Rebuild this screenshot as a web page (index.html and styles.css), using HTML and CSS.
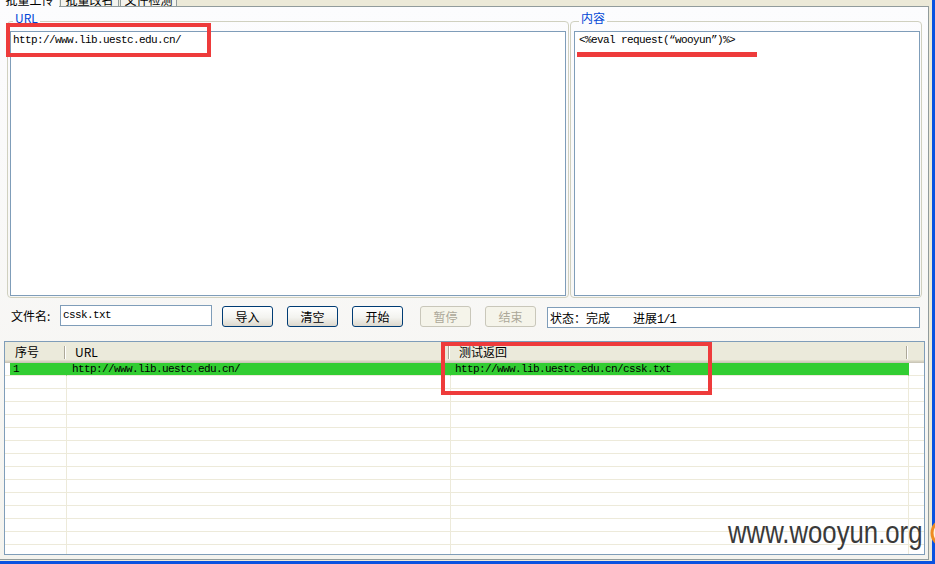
FILE: index.html
```html
<!DOCTYPE html>
<html>
<head>
<meta charset="utf-8">
<title>批量上传</title>
<link rel="stylesheet" href="styles.css">
</head>
<body>
<div class="window">
  <div class="client">
    <div class="main">
      <div class="tabs">
        <div class="tab active"><span>批量上传</span></div>
        <div class="tab t2"><span>批量改名</span></div>
        <div class="tab t3"><span>文件检测</span></div>
        <div class="tab-fill"></div>
      </div>
      <div class="page">
        <div class="groups">
          <fieldset class="group group-url">
            <legend>URL</legend>
            <div class="edit">http://www.lib.uestc.edu.cn/</div>
          </fieldset>
          <fieldset class="group group-content">
            <legend>内容</legend>
            <div class="edit edit-content">&lt;%eval request(“wooyun”)%&gt;</div>
          </fieldset>
        </div>
        <div class="controls">
          <div class="label">文件名:</div>
          <div class="field">cssk.txt</div>
          <div class="btn b-first">导入</div>
          <div class="btn b-next">清空</div>
          <div class="btn b-next">开始</div>
          <div class="btn disabled b-gap">暂停</div>
          <div class="btn disabled b-next">结束</div>
          <div class="status">状态：完成<span class="prog">进展<span class="mono">1/1</span></span></div>
        </div>
        <div class="list">
          <div class="lv-head">
            <div class="hc w1 first">序号</div>
            <div class="hc w2">URL</div>
            <div class="hc w3">测试返回</div>
            <div class="hc w4"></div>
          </div>
          <div class="lv-row sel"><div class="cell w1 c1">1</div><div class="cell w2 c2">http://www.lib.uestc.edu.cn/</div><div class="cell w3 c3">http://www.lib.uestc.edu.cn/cssk.txt</div><div class="cell w4"></div></div>
          <div class="lv-row"><div class="cell w1"></div><div class="cell w2"></div><div class="cell w3"></div><div class="cell w4"></div></div>
          <div class="lv-row"><div class="cell w1"></div><div class="cell w2"></div><div class="cell w3"></div><div class="cell w4"></div></div>
          <div class="lv-row"><div class="cell w1"></div><div class="cell w2"></div><div class="cell w3"></div><div class="cell w4"></div></div>
          <div class="lv-row"><div class="cell w1"></div><div class="cell w2"></div><div class="cell w3"></div><div class="cell w4"></div></div>
          <div class="lv-row"><div class="cell w1"></div><div class="cell w2"></div><div class="cell w3"></div><div class="cell w4"></div></div>
          <div class="lv-row"><div class="cell w1"></div><div class="cell w2"></div><div class="cell w3"></div><div class="cell w4"></div></div>
          <div class="lv-row"><div class="cell w1"></div><div class="cell w2"></div><div class="cell w3"></div><div class="cell w4"></div></div>
          <div class="lv-row"><div class="cell w1"></div><div class="cell w2"></div><div class="cell w3"></div><div class="cell w4"></div></div>
          <div class="lv-row"><div class="cell w1"></div><div class="cell w2"></div><div class="cell w3"></div><div class="cell w4"></div></div>
          <div class="lv-row"><div class="cell w1"></div><div class="cell w2"></div><div class="cell w3"></div><div class="cell w4"></div></div>
          <div class="lv-row"><div class="cell w1"></div><div class="cell w2"></div><div class="cell w3"></div><div class="cell w4"></div></div>
          <div class="lv-row"><div class="cell w1"></div><div class="cell w2"></div><div class="cell w3"></div><div class="cell w4"></div></div>
          <div class="lv-row"><div class="cell w1"></div><div class="cell w2"></div><div class="cell w3"></div><div class="cell w4"></div></div>
          <div class="lv-row"><div class="cell w1"></div><div class="cell w2"></div><div class="cell w3"></div><div class="cell w4"></div></div>
        </div>
      </div>
    </div>
    <div class="frame-r"></div>
  </div>
  <div class="frame-b"></div>
</div>

<div class="mark mark1"></div>
<div class="mark-line"></div>
<div class="mark mark2"></div>
<div class="wm">www.wooyun.org</div>
<svg class="logo" width="30" height="34" viewBox="0 0 30 34"><circle cx="17" cy="17" r="13" fill="#FFF4E6" stroke="#EE8A22" stroke-width="3"/></svg>
</body>
</html>
```

FILE: styles.css
```css
* { box-sizing: border-box; }
html, body { margin: 0; padding: 0; }
body {
  width: 935px;
  height: 564px;
  overflow: hidden;
  position: relative;
  background: #ECE9D8;
  font-family: "Noto Sans CJK SC", "Liberation Sans", sans-serif;
  font-size: 12px;
  color: #000;
}
.mono, .edit, .field, .cell {
  font-family: "Liberation Mono", "Noto Sans CJK SC", monospace;
  font-size: 11px;
  letter-spacing: -0.6px;
}
.window { display: flex; flex-direction: column; width: 935px; height: 564px; }
.client { display: flex; height: 561px; }
.main { width: 932px; display: flex; flex-direction: column; background: #ECE9D8; }
.frame-r { width: 3px; background: #0A52E0; }
.frame-b { height: 3px; background: #0A52E0; }

/* tabs */
.tabs {
  display: flex;
  width: 929px;
  height: 7px;
  flex: none;
  background: linear-gradient(to top, #919B9C 1px, transparent 1px);
}
.tab {
  height: 7px;
  overflow: hidden;
  line-height: 12px;
  text-align: center;
  background: #F4F3EE;
  border: 1px solid #919B9C;
  border-top: none;
  margin-right: 1px;
}
.tab span { display: block; margin-top: -6px; }
.tab.active { width: 59px; background: #FCFCFE; border: none; }
.tab.t2 { width: 59px; }
.tab.t3 { width: 57px; }
.tab-fill { flex: 1; }

/* page */
.page {
  flex: 1;
  width: 929px;
  margin-bottom: 1px;
  border-right: 1px solid #919B9C;
  border-bottom: 1px solid #919B9C;
  background: linear-gradient(#FCFCFE, #F4F3EE);
}
.groups { display: flex; gap: 1px; margin: 5px 0 0 7px; }
.group {
  margin: 0;
  min-width: 0;
  border: 1px solid #D0D0BF;
  border-radius: 4px;
  padding: 1px 2px 1px 2px;
}
.group-url { width: 562px; }
.group-content { width: 352px; padding-left: 3px; padding-right: 1px; }
.group legend {
  padding: 0 2px 6px;
  margin-left: 3px;
  line-height: 12px;
  font-size: 12px;
  color: #0046D5;
}
.group-content legend { margin-left: 5px; }
.edit {
  height: 265px;
  border: 1px solid #7F9DB9;
  background: #fff;
  padding: 2px 2px;
  line-height: 13px;
  white-space: nowrap;
}
.edit-content { padding-left: 4px; }

/* controls */
.controls { display: flex; align-items: flex-start; height: 23px; margin: 7px 0 0 11px; }
.label { width: 49px; line-height: 21px; }
.field {
  width: 152px;
  height: 21px;
  border: 1px solid #7F9DB9;
  background: #fff;
  padding: 0 2px;
  line-height: 18px;
}
.btn {
  width: 51px;
  height: 21px;
  margin-top: 1px;
  border: 1px solid #003C74;
  border-radius: 3px;
  background: linear-gradient(#FFFFFF, #F3F3EF 55%, #DCD8CD);
  display: flex;
  align-items: center;
  justify-content: center;
  line-height: 12px;
}
.btn.disabled { border-color: #C9C7BA; background: #F5F4EA; color: #ACA899; }
.b-first { margin-left: 10px; }
.b-next { margin-left: 14px; }
.b-gap { margin-left: 17px; }
.status {
  width: 373px;
  height: 21px;
  margin: 2px 0 0 11px;
  border: 1px solid #7F9DB9;
  background: #fff;
  padding-left: 2px;
  line-height: 19px;
  white-space: nowrap;
}
.prog { margin-left: 23px; }
.prog .mono { font-size: 12px; letter-spacing: -1px; }

/* list view */
.list {
  margin: 13px 0 0 4px;
  width: 921px;
  height: 214px;
  border: 1px solid #7F9DB9;
  background: #fff;
  overflow: hidden;
}
.lv-head {
  display: flex;
  height: 21px;
  background: #EBEADB;
  box-shadow: inset 0 -1px #CBC7B8, inset 0 -2px #D6D2C2, inset 0 -3px #E2DECD;
}
.hc {
  height: 21px;
  line-height: 20px;
  padding-left: 8px;
  white-space: nowrap;
  background: linear-gradient(to right, #ACA899 1px, #FFFFFF 1px) no-repeat right 1px top 4px / 2px 13px;
}
.hc.first { padding-left: 10px; }
.hc.w4 { background: none; }
.w1 { width: 62px; flex: none; }
.w2 { width: 384px; flex: none; }
.w3 { width: 458px; flex: none; }
.w4 { flex: 1; }
.lv-row { display: flex; height: 13px; }
.cell {
  height: 13px;
  line-height: 12px;
  border-right: 1px solid #EDEADA;
  border-bottom: 1px solid #EDEADA;
  white-space: nowrap;
  overflow: hidden;
}
.cell.w4 { border-right: none; }
.c1 { padding-left: 8px; }
.c2 { padding-left: 5px; }
.c3 { padding-left: 4px; }
.sel .cell { background: #32CD32; border-right-color: #32CD32; }
.sel .c1 { background: linear-gradient(to right, #FFFFFF 5px, #32CD32 5px); }
.sel .cell.w4 { background: #fff; }

/* annotations over the screenshot */
.mark { position: absolute; border: 4px solid #EE3B3B; }
.mark1 { left: 6px; top: 23px; width: 205px; height: 34px; }
.mark2 { left: 441px; top: 342px; width: 271px; height: 53px; }
.mark-line { position: absolute; left: 577px; top: 52px; width: 180px; height: 5px; background: #EE3B3B; }
.wm {
  position: absolute;
  left: 728px;
  top: 517px;
  font-family: "Liberation Sans", sans-serif;
  font-size: 31px;
  line-height: 31px;
  color: #3A3A3A;
  white-space: nowrap;
  transform: scaleX(0.83);
  transform-origin: left top;
}
.logo { position: absolute; left: 928px; top: 516px; }
```
